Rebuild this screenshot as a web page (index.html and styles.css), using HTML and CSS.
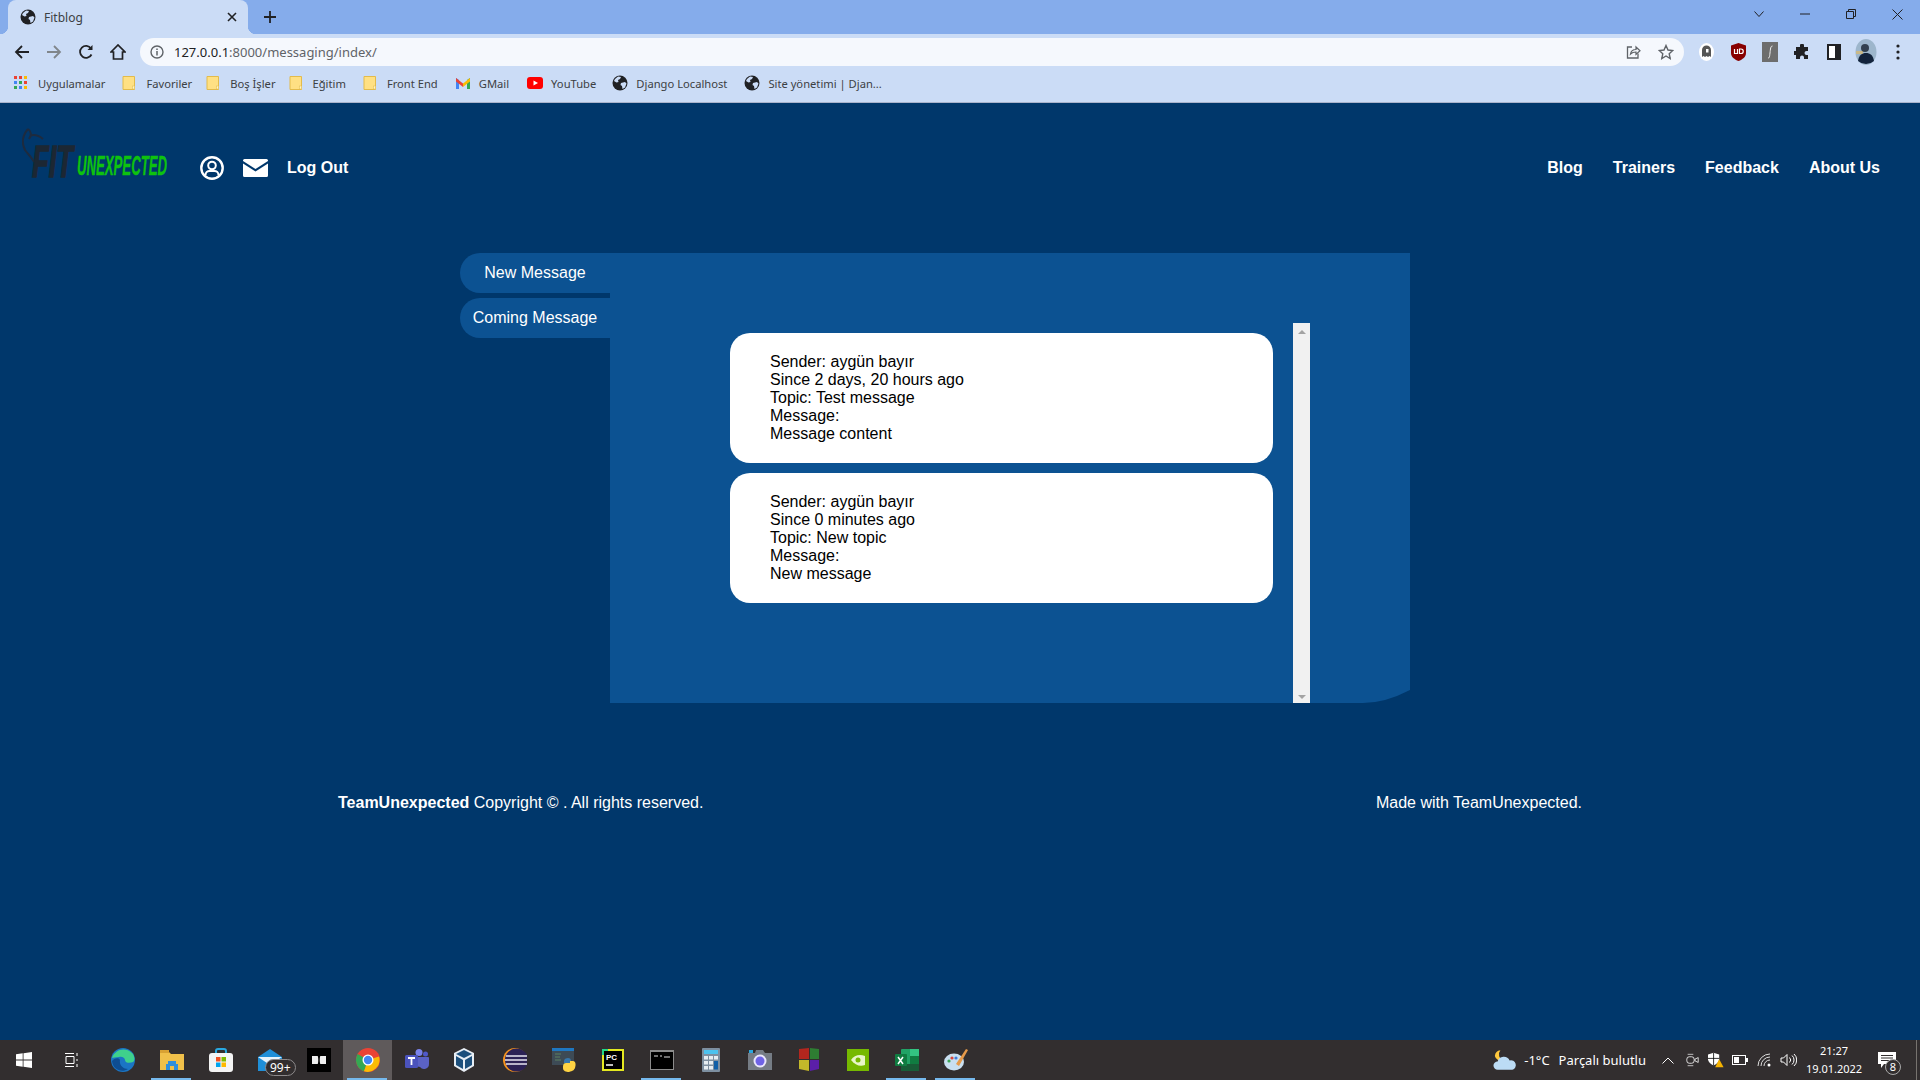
FILE: index.html
```html
<!DOCTYPE html>
<html lang="en">
<head>
  <meta charset="UTF-8">
  <title>Fitblog</title>
  <link rel="stylesheet" href="styles.css">
</head>
<body>
  <svg class="defs" width="0" height="0">
    <symbol id="globe" viewBox="0 0 16 16">
      <circle cx="8" cy="8" r="7.5" fill="#202124"/>
      <path d="M3 4l3-2.5 3 .5-1 2-2 1 .5 2-2 .5L2 6zM9 8l4-1 1.5 1.5-1.5 4-2.5 1.5-.5-3-1.500-1z" fill="#cbdcf6"/>
    </symbol>
    <symbol id="folder" viewBox="0 0 16 16">
      <path d="M1 1.500h9l2.500 0v13H1z" fill="#ffe083" stroke="#e3bb4b"/>
      <rect x="10.500" y="11" width="2" height="3" fill="#fff3c4" stroke="#e3bb4b" stroke-width=".5"/>
    </symbol>
  </svg>

  <div class="browser">
    <div class="tabstrip">
      <div class="tab">
        <svg class="ico16"><use href="#globe"/></svg>
        <span class="tab-title">Fitblog</span>
        <svg class="tab-close" viewBox="0 0 10 10"><path d="M1 1l8 8M9 1l-8 8" stroke="#202124" stroke-width="1.600"/></svg>
      </div>
      <svg class="new-tab" viewBox="0 0 12 12"><path d="M6 0v12M0 6h12" stroke="#202124" stroke-width="1.800"/></svg>
      <div class="win-btns">
        <div class="win-btn"><svg width="10" height="6" viewBox="0 0 10 6"><path d="M.5.500l4.500 5 4.500-5" fill="none" stroke="#202124"/></svg></div>
        <div class="win-btn"><svg width="10" height="2" viewBox="0 0 10 2"><path d="M0 1h10" stroke="#202124"/></svg></div>
        <div class="win-btn"><svg width="10" height="10" viewBox="0 0 10 10"><path d="M.5 2.500h7v7h-7zM2.500 2.500v-2h7v7h-2" fill="none" stroke="#202124"/></svg></div>
        <div class="win-btn"><svg width="11" height="11" viewBox="0 0 11 11"><path d="M.5.500l10 10M10.500.500l-10 10" stroke="#202124"/></svg></div>
      </div>
    </div>

    <div class="toolbar">
      <div class="tool"><svg width="16" height="16" viewBox="0 0 16 16"><path d="M15 8H2M8 2L2 8l6 6" fill="none" stroke="#202124" stroke-width="1.800"/></svg></div>
      <div class="tool"><svg width="16" height="16" viewBox="0 0 16 16"><path d="M1 8h13M8 2l6 6-6 6" fill="none" stroke="#80868b" stroke-width="1.800"/></svg></div>
      <div class="tool"><svg width="16" height="16" viewBox="0 0 16 16"><path d="M13.500 10.500A6 6 0 1 1 13 4.500" fill="none" stroke="#202124" stroke-width="1.800"/><path d="M14.500 1v5h-5z" fill="#202124"/></svg></div>
      <div class="tool"><svg width="16" height="16" viewBox="0 0 16 16"><path d="M1 8l7-7 7 7h-2.500v7h-9V8z" fill="none" stroke="#202124" stroke-width="1.700"/></svg></div>
      <div class="omnibox">
        <svg class="info" width="14" height="14" viewBox="0 0 14 14"><circle cx="7" cy="7" r="6" fill="none" stroke="#5f6368" stroke-width="1.400"/><path d="M7 6v4.500M7 3.500v1.500" stroke="#5f6368" stroke-width="1.500"/></svg>
        <span class="url"><span class="url-host">127.0.0.1</span>:8000/messaging/index/</span>
        <svg class="omni-ico" width="16" height="16" viewBox="0 0 16 16"><path d="M7 3H2.500v11H13V9.500" fill="none" stroke="#5f6368" stroke-width="1.300"/><path d="M5.500 10c.5-3 3-4.500 5.500-4.500V3l4 3.800-4 3.700V8c-2 0-4 .5-5.500 2z" fill="none" stroke="#5f6368" stroke-width="1.200"/></svg>
        <svg class="omni-ico" width="16" height="16" viewBox="0 0 16 16"><path d="M8 1.500l2 4.500 4.800.5-3.600 3.200 1 4.800L8 12l-4.200 2.500 1-4.800L1.200 6.500 6 6z" fill="none" stroke="#5f6368" stroke-width="1.400"/></svg>
      </div>
      <div class="tool"><svg width="15" height="18" viewBox="0 0 15 18"><ellipse cx="7.500" cy="9" rx="7.500" ry="9" fill="#fff"/><path d="M3 14V7a4.500 4.500 0 0 1 9 0v7l-1.500-1-1.500 1-1.500-1-1.500 1-1.500-1z" fill="#555"/><rect x="7" y="6" width="2.500" height="3.500" fill="#fff"/></svg></div>
      <div class="tool"><svg width="15" height="18" viewBox="0 0 15 18"><path d="M7.500 0L15 2.500V10c0 4-3.500 6.500-7.500 8C3.500 16.500 0 14 0 10V2.500z" fill="#800"/><path d="M3.500 6v4.500h3V6M8.500 6v4.500h1.500a2.200 2.200 0 0 0 0-4.500z" fill="none" stroke="#fff" stroke-width="1.200"/></svg></div>
      <div class="tool"><svg width="16" height="20" viewBox="0 0 16 20"><rect width="16" height="20" fill="#6d6d6d"/><path d="M6 16c1.500 0 1.500-1 2-5s.5-7 2.500-7" fill="none" stroke="#eee" stroke-width="1"/></svg></div>
      <div class="tool"><svg width="16" height="16" viewBox="0 0 16 16"><path d="M6 1.500a2 2 0 0 1 4 0V3h4v4h-1.500a2 2 0 0 0 0 4H14v4h-4v-1.500a2 2 0 0 0-4 0V15H2v-4H.5a2 2 0 0 1 0-4H2V3h4z" fill="#202124"/></svg></div>
      <div class="tool"><svg width="14" height="16" viewBox="0 0 14 16"><rect x="1" y="1" width="12" height="14" fill="#fff" stroke="#202124" stroke-width="2"/><rect x="8" y="1" width="5" height="14" fill="#202124"/></svg></div>
      <div class="tool"><svg width="22" height="26" viewBox="0 0 22 26"><ellipse cx="11" cy="13" rx="10.500" ry="13" fill="#9db6cc"/><path d="M1 12h7v3H1z" fill="#c9b98a"/><path d="M3 22c1-6 4-8 8-8s7 2 8 8a12 12 0 0 1-16 0z" fill="#13233c"/><circle cx="10" cy="9" r="4" fill="#33404f"/></svg></div>
      <div class="tool"><svg width="4" height="16" viewBox="0 0 4 16"><circle cx="2" cy="2" r="1.600" fill="#202124"/><circle cx="2" cy="8" r="1.600" fill="#202124"/><circle cx="2" cy="14" r="1.600" fill="#202124"/></svg></div>
    </div>

    <div class="bookmarks">
      <div class="bm bm-apps">
        <svg class="ico14" viewBox="0 0 14 14">
          <rect width="3" height="3" fill="#ea4335"/><rect x="5" width="3" height="3" fill="#ea4335"/><rect x="10" width="3" height="3" fill="#fbbc04"/>
          <rect y="5" width="3" height="3" fill="#4285f4"/><rect x="5" y="5" width="3" height="3" fill="#34a853"/><rect x="10" y="5" width="3" height="3" fill="#ea4335"/>
          <rect y="10" width="3" height="3" fill="#34a853"/><rect x="5" y="10" width="3" height="3" fill="#4285f4"/><rect x="10" y="10" width="3" height="3" fill="#fbbc04"/>
        </svg>
        <span>Uygulamalar</span>
      </div>
      <div class="bm bm-fav"><svg class="ico16"><use href="#folder"/></svg><span>Favoriler</span></div>
      <div class="bm bm-bos"><svg class="ico16"><use href="#folder"/></svg><span>Boş İşler</span></div>
      <div class="bm bm-egi"><svg class="ico16"><use href="#folder"/></svg><span>Eğitim</span></div>
      <div class="bm bm-front"><svg class="ico16"><use href="#folder"/></svg><span>Front End</span></div>
      <div class="bm bm-gmail">
        <svg class="ico16" viewBox="0 0 16 16"><path d="M1 14V3l3 2v9z" fill="#4285f4"/><path d="M15 14V3l-3 2v9z" fill="#34a853"/><path d="M1 3l7 5.500V12L1 6.500z" fill="#ea4335"/><path d="M15 3L8 8.500V12l7-5.500z" fill="#fbbc04"/></svg>
        <span>GMail</span>
      </div>
      <div class="bm bm-yt">
        <svg class="ico16" viewBox="0 0 16 16"><rect y="2" width="16" height="12" rx="3" fill="#f00"/><path d="M6.500 5.500v5L11 8z" fill="#fff"/></svg>
        <span>YouTube</span>
      </div>
      <div class="bm bm-django"><svg class="ico16"><use href="#globe"/></svg><span>Django Localhost</span></div>
      <div class="bm"><svg class="ico16"><use href="#globe"/></svg><span>Site yönetimi | Djan...</span></div>
    </div>
  </div>

  <div class="page">
    <header class="site-header">
      <div class="header-left">
        <svg class="logo" viewBox="0 0 156 64" role="img" aria-label="Fit Unexpected">
          <path d="M6 1C0 8 0 16 3 22c3 4 7 8 9 12M6 1c3 2 4 6 1 10M8 8c4-2 8-1 13 3" fill="none" stroke="#1d2b3f" stroke-width="2"/>
          <text x="10" y="49" class="logo-fit" textLength="41" lengthAdjust="spacingAndGlyphs">FIT</text>
          <text x="55" y="47" class="logo-word" textLength="90" lengthAdjust="spacingAndGlyphs">UNEXPECTED</text>
        </svg>
        <svg class="head-ico" width="24" height="24" viewBox="0 0 24 24">
          <circle cx="12" cy="12" r="10.700" fill="none" stroke="#fff" stroke-width="2.400"/>
          <circle cx="12" cy="9.500" r="3.800" fill="none" stroke="#fff" stroke-width="2"/>
          <path d="M5.500 19c0-2.500 2-4 4-4h5c2 0 4 1.500 4 4" fill="none" stroke="#fff" stroke-width="2"/>
        </svg>
        <svg class="head-ico mail-ico" width="25" height="18" viewBox="0 0 25 18">
          <path d="M1.500 0h22A1.500 1.500 0 0 1 25 1.500v.5L12.500 10 0 2v-.5A1.500 1.500 0 0 1 1.500 0z" fill="#fff"/>
          <path d="M0 4.500l12.500 8 12.500-8v12A1.500 1.500 0 0 1 23.500 18h-22A1.500 1.500 0 0 1 0 16.500z" fill="#fff"/>
        </svg>
        <a class="nav-link logout">Log Out</a>
      </div>
      <nav class="main-nav">
        <a class="nav-link">Blog</a>
        <a class="nav-link">Trainers</a>
        <a class="nav-link">Feedback</a>
        <a class="nav-link">About Us</a>
      </nav>
    </header>

    <main class="messaging">
      <div class="msg-tabs">
        <a class="msg-tab">New Message</a>
        <a class="msg-tab">Coming Message</a>
      </div>
      <section class="msg-panel">
        <div class="msg-list">
          <article class="msg-card">
            Sender: aygün bayır<br>
            Since 2 days, 20 hours ago<br>
            Topic: Test message<br>
            Message:<br>
            Message content
          </article>
          <article class="msg-card">
            Sender: aygün bayır<br>
            Since 0 minutes ago<br>
            Topic: New topic<br>
            Message:<br>
            New message
          </article>
        </div>
        <div class="scrollbar">
          <span class="arrow-up"></span>
          <span class="arrow-down"></span>
        </div>
      </section>
    </main>

    <footer class="site-footer">
      <span><b>TeamUnexpected</b> Copyright © . All rights reserved.</span>
      <span>Made with TeamUnexpected.</span>
    </footer>
  </div>

  <div class="taskbar">
    <div class="task-start"><svg width="16" height="16" viewBox="0 0 16 16"><path d="M0 2.300l6.700-1v6.300H0zM7.500 1.200L16 0v7.600H7.500zM0 8.400h6.700v6.300l-6.700-1zM7.500 8.400H16V16l-8.500-1.200z" fill="#fff"/></svg></div>
    <div class="task-start"><svg width="16" height="16" viewBox="0 0 16 16"><path d="M1 1.500h9M1 14.500h9M2 4.500h8v7H2zM13 1v3M13 7v2M13 12v3" fill="none" stroke="#fff"/></svg></div>
    <div class="task-slot"><svg width="24" height="24" viewBox="0 0 24 24"><circle cx="12" cy="12" r="12" fill="#1b75c4"/><path d="M1 10C3 2 14-2 21 5c3 3 3 8 1 9-3 1.500-8 1-8-2 0-2-3-4-6-3-3 0-6 1-7 1z" fill="#3fd18c"/><path d="M9 12c-1 5 3 9 8 9-6 4-15 1-16-8 2-3 7-4 8-1z" fill="#0e4d92"/></svg></div>
    <div class="task-slot running"><svg width="24" height="20" viewBox="0 0 24 20"><path d="M0 2h9l2 2h13v16H0z" fill="#f0c04a"/><path d="M0 0h9v3H0z" fill="#d9a233"/><path d="M6 20v-6h2v-3h8v3h2v6h-4v-4h-4v4z" fill="#2f8fdd"/></svg></div>
    <div class="task-slot"><svg width="24" height="24" viewBox="0 0 24 24"><path d="M7 6V3a2 2 0 0 1 2-2h6a2 2 0 0 1 2 2v3" fill="none" stroke="#29a8e0" stroke-width="2"/><rect y="5" width="24" height="19" rx="3" fill="#f4f4f4"/><rect x="7" y="9" width="4.500" height="4.500" fill="#f25022"/><rect x="12.500" y="9" width="4.500" height="4.500" fill="#7fba00"/><rect x="7" y="14.500" width="4.500" height="4.500" fill="#00a4ef"/><rect x="12.500" y="14.500" width="4.500" height="4.500" fill="#ffb900"/></svg></div>
    <div class="task-slot mail-slot">
      <svg width="24" height="22" viewBox="0 0 24 22"><path d="M0 8L12 0l12 8v14H0z" fill="#1f8fd8"/><path d="M0 8l12 8 12-8H0z" fill="#e8f4fc"/></svg>
      <span class="mail-badge">99+</span>
    </div>
    <div class="task-slot"><svg width="24" height="24" viewBox="0 0 24 24"><rect width="24" height="24" fill="#000"/><path d="M5 8h5.500c1 0 1 8 0 8H5zM19 8h-5.500c-1 0-1 8 0 8H19z" fill="#eee"/></svg></div>
    <div class="task-slot active running"><svg width="24" height="24" viewBox="0 0 24 24"><circle cx="12" cy="12" r="12" fill="#ea4335"/><path d="M12 12L1.600 6A12 12 0 0 0 8 23.300z" fill="#34a853"/><path d="M12 12l11-3.500A12 12 0 0 1 8 23.300z" fill="#fbbc04"/><circle cx="12" cy="12" r="5.500" fill="#fff"/><circle cx="12" cy="12" r="4.200" fill="#4285f4"/></svg></div>
    <div class="task-slot"><svg width="24" height="22" viewBox="0 0 24 22"><circle cx="14" cy="3.500" r="3.500" fill="#7b83eb"/><circle cx="20.500" cy="5" r="2.500" fill="#5059c9"/><path d="M9 8h14a1 1 0 0 1 1 1v6a5 5 0 0 1-9 3 6 6 0 0 1-6-6z" fill="#5b62c5"/><rect y="6" width="13" height="13" rx="1.500" fill="#4b53bc"/><path d="M3 9h7M6.500 9v7" stroke="#fff" stroke-width="1.800"/></svg></div>
    <div class="task-slot vbox"><svg width="20" height="24" viewBox="0 0 20 24"><path d="M10 0l10 5v13l-10 6-10-6V5z" fill="#e8eef5"/><path d="M10 2l8 4-8 4-8-4zM2 8l7 4v9l-7-4zM18 8l-7 4v9l7-4z" fill="#1c4f7c"/></svg></div>
    <div class="task-slot"><svg width="24" height="24" viewBox="0 0 24 24"><circle cx="12" cy="12" r="12" fill="#f6931e"/><circle cx="13.500" cy="12" r="11.500" fill="#2c2255"/><path d="M3 8h21M2 12h22M3 16h21" stroke="#e8e6f0" stroke-width="1.600"/></svg></div>
    <div class="task-slot"><svg width="24" height="24" viewBox="0 0 24 24"><rect width="22" height="17" fill="#3d4a55"/><rect width="22" height="3" fill="#1f77c0"/><path d="M3 6h6M3 9h5M3 12h6" stroke="#5c8060"/><path d="M12 13c0-2 2-3 4-3s3 1 3 3v2h-7z" fill="#3776ab"/><path d="M11 20c0-2 0-5 3-5h4v-2h3c3 0 3 4 2 7-1 2-2 3-6 4-3 0-6-1-6-4z" fill="#ffd343"/></svg></div>
    <div class="task-slot"><svg width="22" height="22" viewBox="0 0 22 22"><rect width="22" height="22" fill="#e5e821"/><rect x="2" y="2" width="18" height="18" fill="#000"/><path d="M0 0h6v2H2v4H0z" fill="#21d789"/><text x="4" y="11" class="pc-text">PC</text><path d="M4 16h7" stroke="#fff" stroke-width="1.500"/></svg></div>
    <div class="task-slot running"><svg width="24" height="20" viewBox="0 0 24 20"><rect width="24" height="20" fill="#8c8c8c"/><rect x="1" y="2" width="22" height="17" fill="#000"/><path d="M4 6h4M10 6h2M14 7h6" stroke="#ddd"/></svg></div>
    <div class="task-slot"><svg width="18" height="24" viewBox="0 0 18 24"><rect width="18" height="24" rx="1" fill="#7d8fa0"/><rect x="2" y="2" width="14" height="4" fill="#4cc2ee"/><g fill="#e6edf2"><rect x="2" y="8" width="4" height="3.500"/><rect x="7" y="8" width="4" height="3.500"/><rect x="12" y="8" width="4" height="3.500"/><rect x="2" y="13" width="4" height="3.500"/><rect x="7" y="13" width="4" height="3.500"/><rect x="2" y="18" width="4" height="3.500"/><rect x="7" y="18" width="4" height="3.500"/></g><rect x="12" y="13" width="4" height="8.500" fill="#0f5fa8"/></svg></div>
    <div class="task-slot"><svg width="24" height="20" viewBox="0 0 24 20"><path d="M0 3h7l1-3h7l2 3h7v17H0z" fill="#757c85"/><rect x="1" y="0" width="4" height="3" fill="#29a8e0"/><circle cx="12" cy="11" r="6.500" fill="#e9e6fb"/><circle cx="12" cy="11" r="4.500" fill="#6f63e6"/></svg></div>
    <div class="task-slot"><svg width="22" height="24" viewBox="0 0 22 24"><path d="M1 1l10-1v11H1z" fill="#b3261e"/><path d="M12 0l9 1v10h-9z" fill="#2e7d32"/><path d="M1 12h10v11l-10-2z" fill="#c3b82a"/><path d="M12 12h9v9l-9 2z" fill="#5b1fa8"/></svg></div>
    <div class="task-slot"><svg width="22" height="22" viewBox="0 0 22 22"><rect width="22" height="22" fill="#76b900"/><path d="M4 11c3-5 9-6 14-4v9c-5 2-10 0-14-5z" fill="#e8f5c8"/><circle cx="11" cy="11" r="2.500" fill="#76b900"/></svg></div>
    <div class="task-slot running"><svg width="24" height="22" viewBox="0 0 24 22"><rect x="6" width="18" height="22" rx="1" fill="#21a366"/><rect x="15" width="9" height="7" fill="#33c481"/><rect x="15" y="7" width="9" height="8" fill="#107c41"/><rect x="6" y="15" width="18" height="7" fill="#185c37"/><rect y="5" width="12" height="12" rx="1" fill="#107c41"/><path d="M3 8l5 7M8 8l-5 7" stroke="#fff" stroke-width="1.500"/></svg></div>
    <div class="task-slot running"><svg width="24" height="24" viewBox="0 0 24 24"><ellipse cx="10" cy="14" rx="10" ry="8.500" fill="#c9dff0"/><circle cx="5" cy="13" r="1.600" fill="#3aa655"/><circle cx="8" cy="10" r="1.600" fill="#d9453a"/><circle cx="12" cy="10" r="1.600" fill="#3d7bd9"/><path d="M12 16L22 1l2 1-9 16z" fill="#e69a4a"/></svg></div>

    <div class="tray">
      <svg class="weather" width="24" height="21" viewBox="0 0 26 22"><path d="M8 0a7 7 0 0 0 3 11A7 7 0 0 1 2 6 7 7 0 0 1 8 0z" fill="#ffc83d"/><path d="M5 21a4.500 4.500 0 0 1 0-9 7 7 0 0 1 13-1 5 5 0 0 1 3 10z" fill="#bcdcf5"/></svg>
      <span class="temp">-1°C</span>
      <span class="cond">Parçalı bulutlu</span>
      <div class="tray-ico"><svg width="12" height="7" viewBox="0 0 12 7"><path d="M.5 6.500L6 1l5.500 5.500" fill="none" stroke="#fff"/></svg></div>
      <div class="tray-ico"><svg width="13" height="16" viewBox="0 0 16 16"><path d="M2 1h7M2 15h7" stroke="#ddd"/><rect x="1" y="4" width="9" height="8" rx="3" fill="none" stroke="#fff"/><path d="M11 7l4-2v6l-4-2z" fill="none" stroke="#fff"/></svg></div>
      <div class="tray-ico"><svg width="16" height="16" viewBox="0 0 20 18"><path d="M7 0l7 2v6c0 3-3 6-7 8-4-2-7-5-7-8V2z" fill="#fff"/><path d="M7 0v16M0 7h14" stroke="#000"/><path d="M14 8l5.500 10H9z" fill="#f5b301"/></svg></div>
      <div class="tray-ico"><svg width="16" height="10" viewBox="0 0 16 10"><rect x=".5" y=".5" width="13" height="9" fill="none" stroke="#fff"/><rect x="2" y="2" width="5" height="6" fill="#fff"/><rect x="14" y="3" width="2" height="4" fill="#fff"/></svg></div>
      <div class="tray-ico"><svg width="14" height="14" viewBox="0 0 14 14"><path d="M1 13a12 12 0 0 1 12-12M4 13a9 9 0 0 1 9-9M7 13a6 6 0 0 1 6-6" fill="none" stroke="#ddd"/><circle cx="12" cy="12" r="1.500" fill="#fff"/></svg></div>
      <div class="tray-ico"><svg width="17" height="14" viewBox="0 0 17 14"><path d="M1 5h2.500L7 1.500v11L3.500 9H1z" fill="none" stroke="#fff"/><path d="M9.500 4.500a3.500 3.500 0 0 1 0 5M12 2.500a6 6 0 0 1 0 9M14 1a8 8 0 0 1 0 12" fill="none" stroke="#fff"/></svg></div>
      <div class="clock"><span>21:27</span><span>19.01.2022</span></div>
      <div class="notif">
        <svg width="18" height="16" viewBox="0 0 18 16"><path d="M0 0h18v12H6l-3 4v-4H0z" fill="#fff"/><path d="M3 3.500h12M3 6h12M3 8.500h8" stroke="#322e2f"/></svg>
        <span class="notif-badge">8</span>
      </div>
      <div class="show-desktop"></div>
    </div>
  </div>
</body>
</html>
```
FILE: styles.css
```css
html, body {
  margin: 0;
  height: 100%;
}
body {
  display: flex;
  flex-direction: column;
  height: 1080px;
  overflow: hidden;
  background: #00376b;
  font-family: "Liberation Sans", Arial, sans-serif;
  font-size: 16px;
  color: #fff;
}
.defs {
  position: absolute;
}
svg {
  display: block;
  flex: none;
}
.ico16 {
  width: 16px;
  height: 16px;
}
.ico14 {
  width: 14px;
  height: 14px;
}

/* browser chrome */
.browser {
  font-family: "Noto Sans", sans-serif;
  font-size: 12px;
  color: #3c4043;
}
.tabstrip {
  display: flex;
  height: 34px;
  background: #85aceb;
}
.tab {
  position: relative;
  display: flex;
  align-items: center;
  width: 240px;
  margin-left: 8px;
  padding: 0 11px 0 12px;
  box-sizing: border-box;
  background: #cbdcf6;
  border-radius: 8px 8px 0 0;
}
/* the little flares at the foot of the active tab */
.tab::before,
.tab::after {
  content: "";
  position: absolute;
  bottom: 0;
  width: 8px;
  height: 8px;
}
.tab::before {
  left: -8px;
  background: radial-gradient(circle at 0 0, #85aceb 8px, #cbdcf6 8.500px);
}
.tab::after {
  right: -8px;
  background: radial-gradient(circle at 100% 0, #85aceb 8px, #cbdcf6 8.500px);
}
.tab-title {
  flex: 1;
  margin-left: 8px;
}
.tab-close {
  width: 10px;
  height: 10px;
}
.new-tab {
  width: 12px;
  height: 12px;
  margin: 11px 0 0 16px;
}
.win-btns {
  display: flex;
  margin-left: auto;
}
.win-btn {
  display: flex;
  align-items: center;
  justify-content: center;
  width: 46px;
  height: 28px;
}
.toolbar {
  display: flex;
  align-items: center;
  height: 36px;
  padding: 0 6px;
  background: #cbdcf6;
}
.tool {
  display: flex;
  align-items: center;
  justify-content: center;
  width: 32px;
  height: 32px;
}
.omnibox {
  flex: 1;
  display: flex;
  align-items: center;
  height: 28px;
  margin: 0 6px;
  padding: 0 10px;
  background: #f5f8fd;
  border-radius: 14px;
}
.info {
  margin-right: 10px;
}
.url {
  flex: 1;
  font-size: 13px;
  color: #5f6368;
}
.url-host {
  color: #202124;
}
.omni-ico {
  margin-left: 17px;
}
.bookmarks {
  display: flex;
  align-items: center;
  height: 26px;
  padding: 0 0 6px 14px;
  background: #cbdcf6;
  border-bottom: 1px solid #aab4cc;
}
.bm {
  display: flex;
  align-items: center;
  margin-right: 15px;
  font-size: 11.200px;
  white-space: nowrap;
}
.bm svg {
  margin-right: 8px;
}
.bm-apps {
  margin-right: 17px;
}
.bm-apps svg {
  margin-right: 10px;
}
.bm-fav {
  margin-right: 14px;
}
.bm-bos {
  margin-right: 13px;
}
.bm-egi {
  margin-right: 17px;
}
.bm-front {
  margin-right: 17px;
}
.bm-gmail {
  margin-right: 18px;
}
.bm-yt {
  margin-right: 16px;
}
.bm-django {
  margin-right: 17px;
}

/* site */
.page {
  flex: 1;
}
.site-header {
  display: flex;
  align-items: center;
  justify-content: space-between;
  height: 130px;
  padding: 0 40px 0 22px;
}
.header-left {
  display: flex;
  align-items: center;
}
.logo {
  width: 156px;
  height: 64px;
  margin-top: -17px;
}
.logo-fit {
  font: italic 700 44px "Liberation Sans", sans-serif;
  fill: #1c2733;
  stroke: #1c2733;
  stroke-width: 1.500px;
}
.logo-word {
  font: italic 700 28px "Liberation Sans", sans-serif;
  fill: #0ec20e;
  stroke: #0ec20e;
  stroke-width: .4px;
}
.head-ico {
  margin-left: 22px;
}
.mail-ico {
  margin-left: 19px;
}
.nav-link {
  font-weight: 700;
  color: #fff;
}
.logout {
  margin-left: 19px;
}
.main-nav {
  display: flex;
  gap: 30px;
}

.messaging {
  display: flex;
  margin: 20px 0 0 460px;
}
.msg-tabs {
  display: flex;
  flex-direction: column;
  gap: 5px;
  width: 150px;
}
.msg-tab {
  height: 40px;
  line-height: 40px;
  text-align: center;
  background: #0c5292;
  border-radius: 20px 0 0 20px;
}
.msg-panel {
  display: flex;
  align-items: stretch;
  box-sizing: border-box;
  width: 800px;
  height: 450px;
  padding: 70px 100px 0 120px;
  background: #0c5292;
  clip-path: path("M0 0H800V437Q775 450 753 450H0Z");
}
.msg-list {
  flex: 1;
  padding-top: 10px;
}
.msg-card {
  width: 543px;
  box-sizing: border-box;
  height: 130px;
  margin-bottom: 10px;
  padding: 20px 40px;
  line-height: 18px;
  color: #000;
  background: #fff;
  border-radius: 20px;
}
.scrollbar {
  position: relative;
  width: 17px;
  background: #f1f1f1;
}
.arrow-up,
.arrow-down {
  position: absolute;
  left: 5px;
  border-left: 4px solid transparent;
  border-right: 4px solid transparent;
}
.arrow-up {
  top: 7px;
  border-bottom: 4px solid #a3a3a3;
}
.arrow-down {
  bottom: 4px;
  border-top: 4px solid #a3a3a3;
}

.site-footer {
  display: flex;
  justify-content: space-between;
  width: 1244px;
  margin: 91px 0 0 338px;
  line-height: 18px;
}

/* windows taskbar */
.taskbar {
  display: flex;
  align-items: center;
  height: 40px;
  background: #322e2f;
  font-family: "Noto Sans", sans-serif;
  font-size: 12px;
  color: #fff;
}
.task-start {
  display: flex;
  align-items: center;
  justify-content: center;
  width: 48px;
  height: 40px;
}
.task-start + .task-start {
  margin-right: 2px;
}
.task-slot {
  position: relative;
  display: flex;
  align-items: center;
  justify-content: center;
  box-sizing: border-box;
  width: 49px;
  height: 40px;
}
.vbox {
  padding-right: 3px;
}
.running::after {
  content: "";
  position: absolute;
  left: 4px;
  right: 5px;
  bottom: 0;
  height: 2px;
  background: #76b9ed;
}
.active {
  background: #5f5a5b;
}
.mail-badge {
  position: absolute;
  left: 20px;
  top: 19px;
  padding: 0 4px;
  font-size: 12px;
  line-height: 15px;
  background: #322e2f;
  border: 1px solid #8d8a8b;
  border-radius: 9px;
}
.pc-text {
  font: 700 8px "Liberation Sans", sans-serif;
  fill: #fff;
}
.tray {
  display: flex;
  align-items: center;
  height: 40px;
  margin-left: auto;
}
.weather {
  margin-right: 7px;
}
.temp {
  margin-right: 9px;
  font-size: 13px;
}
.cond {
  margin-right: 10px;
  font-size: 13px;
}
.tray-ico {
  display: flex;
  align-items: center;
  justify-content: center;
  width: 24px;
}
.clock {
  display: flex;
  flex-direction: column;
  align-items: center;
  width: 68px;
  font-size: 11px;
  line-height: 18px;
}
.notif {
  position: relative;
  width: 48px;
}
.notif svg {
  margin-left: 10px;
}
.notif-badge {
  position: absolute;
  left: 17px;
  top: 7px;
  width: 14px;
  font-size: 11px;
  line-height: 14px;
  text-align: center;
  background: #322e2f;
  border: 1px solid #aaa;
  border-radius: 50%;
}
.show-desktop {
  width: 3px;
  height: 40px;
  border-left: 1px solid #77736f;
}
```
